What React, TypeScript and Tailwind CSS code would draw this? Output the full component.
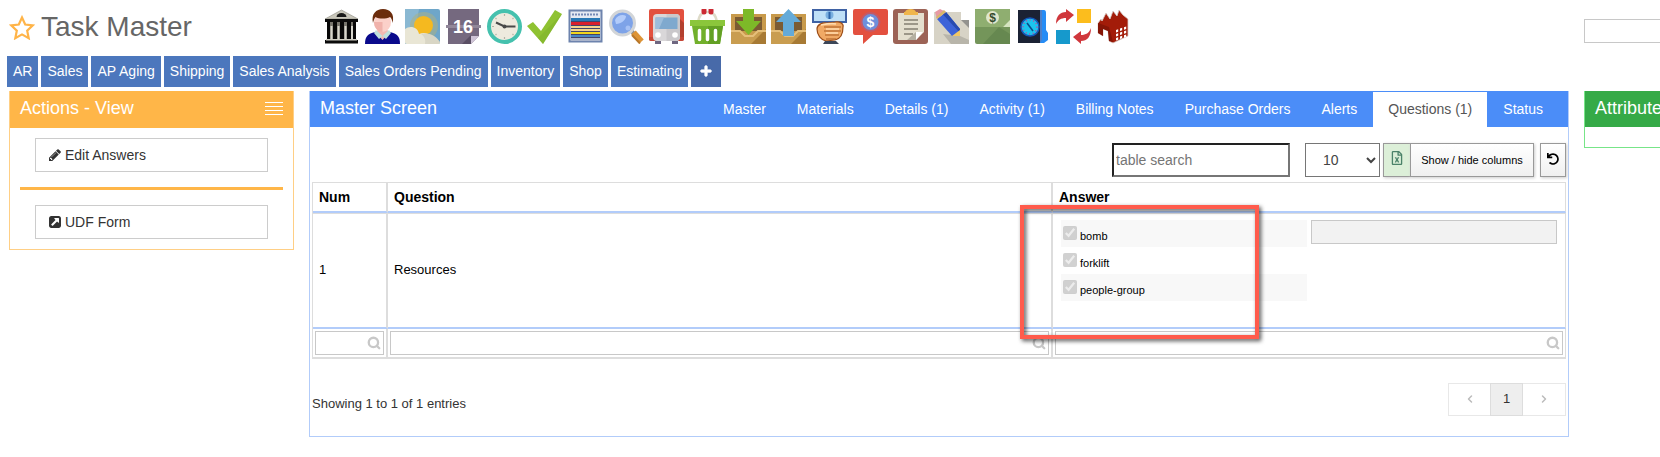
import React from "react";
import { FaPlus, FaUndo, FaRegFileExcel } from "react-icons/fa";
import { ChevronLeft, ChevronRight, Search } from "lucide-react";

type Shortcut = { label: string; art: React.ReactNode };

const shortcuts: Shortcut[] = [
  {
    label: "Bank",
    art: (
      <>
        <path d="M17.500 1 34 10H1z" fill="#c9c7bb" stroke="#8c8a80" strokeWidth=".6" />
        <path d="M12.500 8a5 4 0 0 1 10 0z" fill="#1a1a1a" />
        <path d="M1 10h33v3H1z" fill="#0b0b0b" />
        <path d="M4 13h27v17H4z" fill="#77756d" />
        <path d="M3 13h3v17H3zM9 13h4v17H9zM16 13h4v17h-4zM23 13h4v17h-4zM29 13h3v17h-3z" fill="#080808" />
        <path d="M6.500 17h2v13h-2zM13.500 17h2v13h-2zM20.500 17h2v13h-2zM27 17h2v13h-2z" fill="#d7d5cc" />
        <path d="M1 31h33v3.500H1z" fill="#0b0b0b" />
        <path d="M2 30h31v1.500H2z" fill="#cfcdc2" />
      </>
    ),
  },
  {
    label: "Contact",
    art: (
      <>
        <path d="M0 35c0-8 3-10 10-12h15c7 2 10 4 10 12z" fill="#0a0a8c" />
        <path d="M13 20h9l2 4-6.500 7L11 24z" fill="#f3b9b2" />
        <path d="m11 21 6.500 6L14 30l-5-6zM24 21l-6.500 6 3.500 3 5-6z" fill="#bfe0dc" />
        <ellipse cx="17.500" cy="13" rx="8.500" ry="10" fill="#fbd0c9" />
        <path d="M17.500 23c-5 0-8.500-4.500-8.500-10h8.500z" fill="#f0b2ab" />
        <path d="M8 14C6 5 11 0 18 0s12 5 9.500 14c-.500-3-1-5-2.500-6-4 2-11 2-14.500 0C9 10 8.500 12 8 14z" fill="#6b2c0c" />
      </>
    ),
  },
  {
    label: "Weather",
    art: (
      <>
        <rect width="35" height="35" rx="2" fill="#6ea6c9" />
        <path d="M0 0h14L8 35H0z" fill="#8ab8d2" />
        <circle cx="19" cy="17" r="14" fill="#a5b08c" opacity=".6" />
        <circle cx="18.500" cy="16.500" r="9.500" fill="#f5b91f" />
        <path d="M0 20c5-4 13-2 14 5 7-3 15 1 15 10H2c-2 0-2-1-2-2z" fill="#e9e6d5" />
        <path d="M16 25c7-2 15 1 19 8 0 2-1 2-2 2H20c1-5-1-8-4-10z" fill="#d9d6c5" />
      </>
    ),
  },
  {
    label: "Calendar",
    art: (
      <>
        <path d="M2 0h31v27l-8 8H2z" fill="#75697f" />
        <path d="M0 16h35v3H0z" fill="#918799" />
        <path d="M16 35 25 26v9z" fill="#5a4f64" />
        <path d="M25 27h8l-8 8z" fill="#cfc4d6" />
        <text x="17" y="24" textAnchor="middle" fontSize="18" fontWeight="700" fill="#fff">16</text>
      </>
    ),
  },
  {
    label: "Clock",
    art: (
      <>
        <circle cx="17.500" cy="17.500" r="15.500" fill="#eeeade" stroke="#45c1ae" strokeWidth="4" />
        <path d="M17.500 5v2M17.500 28v2M5 17.500h2M8.500 9l1 1M26.500 9l-1 1M8.500 26l1-1M26.500 26l-1-1" stroke="#b5b2a6" strokeWidth="1.200" />
        <path d="m9 13.500 8.500 4h11" fill="none" stroke="#494949" strokeWidth="2" />
        <circle cx="17.500" cy="17.500" r="2" fill="#494949" />
      </>
    ),
  },
  {
    label: "Approve",
    art: (
      <>
        <path d="m0 17 6-4 8 9L28 1l7 4-19 30z" fill="#8fc232" />
        <path d="m16 35-5-6L35 5z" fill="#7db02a" opacity=".5" />
      </>
    ),
  },
  {
    label: "Schedule board",
    art: (
      <>
        <rect x="1.500" y="1.500" width="32" height="31" fill="#e5e9f2" stroke="#6d83ad" strokeWidth="2" />
        <path d="M4 5.500h27" stroke="#7589b5" strokeWidth="2" strokeDasharray="2 1" />
        <path d="M3 9h29v3.500H3z" fill="#2878b5" />
        <path d="M3 13h29v3H3z" fill="#d9202c" />
        <path d="M3 17h29v5H3z" fill="#f5d58d" />
        <path d="M3 22.500h29v3H3z" fill="#f1d51c" />
        <path d="M3 26h29v2H3z" fill="#4b86c1" />
        <path d="M3 28.500h29v3H3z" fill="#aab2c6" />
        <path d="M3 12.500h29M3 16.500h29M3 19.500h29M3 22.500h29M3 25.500h29M3 28.500h29" stroke="#43456d" strokeWidth="1" />
      </>
    ),
  },
  {
    label: "Find",
    art: (
      <>
        <path d="m22 21 3 4" stroke="#8f8f8f" strokeWidth="4" />
        <path d="m24.500 23.500 8 9" stroke="#dd9436" strokeWidth="6" />
        <path d="m23 26 8 8.500" stroke="#b8772a" strokeWidth="2" />
        <circle cx="13.500" cy="14" r="12" fill="#7ea3e8" stroke="#d2d5d8" strokeWidth="3" />
        <path d="M6 11c2-5 8-6 11-4 0 4-5 8-10 8z" fill="#b3ccfa" />
        <circle cx="19" cy="19" r="2.500" fill="#a6c1f5" />
      </>
    ),
  },
  {
    label: "Transit",
    art: (
      <>
        <rect width="35" height="35" rx="2" fill="#e2513f" />
        <path d="M31 10 35 14v21h-8z" fill="#b3402f" />
        <path d="M0 31h35v4H0z" fill="#fff" />
        <path d="M0 28h35v3a2 2 0 0 1-2 1H2a2 2 0 0 1-2-1z" fill="#c54636" />
        <rect x="4" y="5" width="27" height="27" rx="4" fill="#d9d7d9" />
        <path d="M17.500 5H27a4 4 0 0 1 4 4v19a4 4 0 0 1-4 4h-9.500z" fill="#cac8cb" />
        <rect x="6.500" y="8.500" width="22" height="11.500" fill="#7fa9ce" />
        <path d="M6.500 8.500H15l-5 11.500H6.500z" fill="#9cbddb" />
        <circle cx="9" cy="26" r="2.800" fill="#fff" />
        <circle cx="26" cy="26" r="2.800" fill="#fff" />
        <path d="M6 32h6v3H6zM23 32h6v3h-6z" fill="#6f6781" />
      </>
    ),
  },
  {
    label: "Basket",
    art: (
      <>
        <path d="M8 13c1-7 5-10 9.500-10S26 6 27 13" fill="none" stroke="#dedbc9" strokeWidth="2.500" />
        <path d="M14 1v2M21 1v2" stroke="#cc2a33" strokeWidth="5" strokeLinecap="round" />
        <path d="M0 11h35v6H0z" fill="#8bc63b" />
        <path d="M2 17h31l-3 18H5z" fill="#72b02c" />
        <path d="M18 17h15l-3 18H18z" fill="#63a024" />
        <path d="M9.500 21.500v9M17.500 21.500v9M25.500 21.500v9" stroke="#fff" strokeWidth="3.500" strokeLinecap="round" />
      </>
    ),
  },
  {
    label: "Receive",
    art: (
      <>
        <path d="M0 5h35v30H0z" fill="#c89a4b" />
        <path d="M4 8h27v14H4z" fill="#7b5b33" />
        <path d="M0 22h9l5 5h8l5-5h8v13H0z" fill="#c99d50" />
        <path d="M20 35 35 20v15z" fill="#a77a34" />
        <path d="M0 22h9l5 5h8l5-5h8" fill="none" stroke="#e5bf7a" strokeWidth="2" />
        <path d="M12 0h11v12h7L17.500 26 5 12h7z" fill="#7db928" />
      </>
    ),
  },
  {
    label: "Send",
    art: (
      <>
        <path d="M0 5h35v30H0z" fill="#c89a4b" />
        <path d="M4 8h27v14H4z" fill="#7b5b33" />
        <path d="M0 22h9l5 5h8l5-5h8v13H0z" fill="#c99d50" />
        <path d="M20 35 35 20v15z" fill="#a77a34" />
        <path d="M0 22h9l5 5h8l5-5h8" fill="none" stroke="#e5bf7a" strokeWidth="2" />
        <path d="M17.500 0 30 13h-7v14H12V13H5z" fill="#64aad8" />
      </>
    ),
  },
  {
    label: "Pay",
    art: (
      <>
        <path d="M1 1h33v12H1z" fill="#bfe0f7" stroke="#3f62a4" strokeWidth="2" />
        <circle cx="17.500" cy="6" r="4" fill="#79afe0" />
        <path d="M16.500 3h2v7h-2z" fill="#2c63a8" />
        <path d="M5 20c0-4 5-7 10-6l8-1c5-1 9 2 8 5 0 8-3 12-8 13l-9 1c-5-1-9-6-9-12z" fill="#f0a965" stroke="#9c4d17" strokeWidth="1.200" />
        <path d="M12 18h17M12 22h17M13 26h14M14 30h10" stroke="#a85a20" strokeWidth="1.200" />
        <path d="M9 16c5-1 10-2 15-1M14 20h13M14 24h12" stroke="#ffdcae" strokeWidth="1.600" fill="none" />
        <path d="M13 32h11l3 3H11z" fill="#3c4658" />
      </>
    ),
  },
  {
    label: "Price chat",
    art: (
      <>
        <path d="M2 0h31a2 2 0 0 1 2 2v22a2 2 0 0 1-2 2H20l-10 9v-9H2a2 2 0 0 1-2-2V2a2 2 0 0 1 2-2z" fill="#e3503f" />
        <circle cx="17.500" cy="13" r="9" fill="#6e8fdb" stroke="#c25a69" strokeWidth="2" />
        <text x="17.500" y="18" textAnchor="middle" fontSize="14" fontWeight="700" fill="#fff">$</text>
      </>
    ),
  },
  {
    label: "Clipboard",
    art: (
      <>
        <rect width="35" height="35" rx="3" fill="#9c6356" />
        <path d="M5 4h26v19l-8 8H5z" fill="#e4dfce" />
        <path d="M12 3c1-4 10-4 11 0h2v3H11V3z" fill="#f0b64b" />
        <path d="M11 11h14M11 15h14M11 20h14M11 25h9" stroke="#9c9788" strokeWidth="2" />
        <path d="M23 23h7l-7 8z" fill="#fff" />
        <path d="m14 31 9-8v8z" fill="#b5b0a1" />
      </>
    ),
  },
  {
    label: "Notes",
    art: (
      <>
        <path d="M0 3h27v8h8v24H0z" fill="#d7d3c6" />
        <path d="M27 11h8v8z" fill="#93928e" />
        <path d="m9 25 17 2 9 4v4H17z" fill="#b8b5aa" />
        <path d="m3 10 9-7 14 17v7h-8z" fill="#3d63d8" />
        <path d="m9 5.500 3-2.500 14 17v4z" fill="#284bb0" />
        <path d="M1 3 6 0l6 3-9 7z" fill="#e79aa4" />
        <path d="m3 10-1-2 8-7 2 2z" fill="#d7b76a" />
        <path d="m18 27 8-6v6z" fill="#f1c766" />
      </>
    ),
  },
  {
    label: "Cash",
    art: (
      <>
        <rect width="35" height="35" rx="2" fill="#74955a" />
        <path d="M0 0h35v12l-7 6H0z" fill="#8fae70" />
        <path d="M24 18 35 25v10H8z" fill="#668850" />
        <path d="m28 18 7-7v7z" fill="#d5e4bf" />
        <circle cx="17.500" cy="8.500" r="6.500" fill="#e0e6cc" />
        <text x="17.500" y="13" textAnchor="middle" fontSize="12" fontWeight="700" fill="#344a2c">$</text>
      </>
    ),
  },
  {
    label: "Time book",
    art: (
      <>
        <path d="M3 1h24v33H3z" fill="#1b2234" />
        <path d="M25 1h2v33h-2z" fill="#4b7fc9" />
        <path d="M27 1h2q2 0 2 3v17l2 3v7l-4 3h-4l2-3z" fill="#258cf5" />
        <circle cx="15" cy="18" r="9" fill="#1cc3ee" stroke="#1455b8" strokeWidth="1.500" />
        <circle cx="15" cy="18" r="7" fill="none" stroke="#c04b9a" strokeWidth="1.500" strokeDasharray="1 2.600" />
        <path d="m12 14 3 4 3 4" stroke="#0b4c8a" strokeWidth="1.500" fill="none" />
      </>
    ),
  },
  {
    label: "Exchange",
    art: (
      <>
        <path d="M21 0h14v14H21z" fill="#fcbd1d" />
        <path d="M0 21h14v14H0z" fill="#1699cc" />
        <path d="M0 15C0 7 4 3 10 3V0l8 6-8 7V9C5 9 2 11 0 15z" fill="#d0373c" />
        <path d="M35 19c0 9-4 13-10 13v3l-8-7 8-6v4c5 0 8-2 10-7z" fill="#d0373c" />
      </>
    ),
  },
  {
    label: "Factory",
    art: (
      <>
        <path d="m1 14 3-4 1 2 4-8 4 6 3-8 4 5 2-6 4 5 5 4v17l-15 7-4-2-1-10-5-2v7l-5-3z" fill="#a31c09" stroke="#d8cfcc" strokeWidth=".8" />
        <path d="m1 14 11 4 4 15-4-1-1-10-5-2v7l-5-3z" fill="#861506" />
        <path d="m19 21 2.200-.8v2.500l-2.200.8zM23 19.600l2.200-.8v2.500l-2.200.8zM27 18.200l2.200-.8v2.500l-2.200.8zM19 25l2.200-.8v2.500l-2.200.8zM23 23.600l2.200-.8v2.500l-2.200.8zM27 22.200l2.200-.8v2.500l-2.200.8zM19 29l2.200-.8v2.500L19 31.500zM23 27.600l2.200-.8v2.500l-2.200.8zM27 26.200l2.200-.8v2.500l-2.200.8z" fill="#fff" />
      </>
    ),
  },
];

const reports = ["AR", "Sales", "AP Aging", "Shipping", "Sales Analysis", "Sales Orders Pending", "Inventory", "Shop", "Estimating"];
const tabs = ["Master", "Materials", "Details (1)", "Activity (1)", "Billing Notes", "Purchase Orders", "Alerts", "Questions (1)", "Status"];
const answers = ["bomb", "forklift", "people-group"];

function PencilIcon() {
  return (
    <svg viewBox="0 128 1536 1536" className="size-3" fill="currentColor" aria-hidden="true">
      <path d="M363 1536l91-91-235-235-91 91v107h128v128h107zm523-928q0-22-22-22-10 0-17 7l-542 542q-7 7-7 17 0 22 22 22 10 0 17-7l542-542q7-7 7-17zm-54-192l416 416-832 832h-416v-416zm683 96q0 53-37 90l-166 166-416-416 166-165q36-38 90-38 53 0 91 38l235 234q37 39 37 91z" />
    </svg>
  );
}

function LinkSquareIcon() {
  return (
    <svg viewBox="0 128 1536 1536" className="size-3" fill="currentColor" fillRule="evenodd" aria-hidden="true">
      <path d="M1280 928v-480q0-26-19-45t-45-19h-480q-42 0-59 39-17 41 14 70l144 144-534 534q-19 19-19 45t19 45l102 102q19 19 45 19t45-19l534-534 144 144q18 19 45 19 12 0 25-5 39-17 39-59zm256-512v960q0 119-84.500 203.500t-203.500 84.500h-960q-119 0-203.500-84.500t-84.500-203.500v-960q0-119 84.500-203.500t203.500-84.500h960q119 0 203.500 84.500t84.500 203.500z" />
    </svg>
  );
}

function ActionButton({ icon, children }: { icon: React.ReactNode; children: React.ReactNode }) {
  return (
    <button className="mx-[15px] flex h-[34px] items-center gap-1 border border-[#ccc] bg-white px-[13px] text-[14px] text-[#333]">
      {icon}
      {children}
    </button>
  );
}

function FilterCell({ label, last = false }: { label: string; last?: boolean }) {
  return (
    <td className={last ? "border-b-2 border-r border-[#ddd] p-[2px]" : "border-b-2 border-r-2 border-[#ddd] p-[2px]"}>
      <div className="flex h-6 items-center border border-[#c8c8c8] pr-[2px]">
        <input aria-label={label} className="h-full w-0 min-w-0 flex-1 px-1 text-[13px] outline-none" />
        <Search className="size-[14px] text-[#c8c8c8]" strokeWidth={4} aria-hidden="true" />
      </div>
    </td>
  );
}

export default function App() {
  return (
    <div className="overflow-hidden bg-white pb-5 font-['Liberation_Sans',Arial,sans-serif] text-[#333]">
      <header className="grid h-14 grid-cols-[315px_minmax(0,1fr)_76px] items-start pl-[9px]">
        <h1 className="flex h-[54px] items-center gap-[6px] text-[28px] text-[#666]">
          <svg viewBox="0 0 26 25" className="h-[25px] w-[26px]" fill="none" stroke="#ffb448" strokeWidth="2.200" aria-hidden="true">
            <path d="m13 2.500 3.200 7 7.600.9-5.600 5.200 1.500 7.600-6.700-3.800-6.700 3.800 1.500-7.600L2.200 10.400l7.600-.9z" />
          </svg>
          Task Master
        </h1>
        <nav className="flex w-[808px] justify-between pt-[9px]" aria-label="Shortcuts">
          {shortcuts.map((s) => (
            <a key={s.label} href="#" aria-label={s.label}>
              <svg viewBox="0 0 35 35" className="size-[35px]" aria-hidden="true">
                {s.art}
              </svg>
            </a>
          ))}
        </nav>
        <input aria-label="Search" className="mt-[19px] h-6 w-full border border-r-0 border-[#c8c8c8] px-1 text-[13px]" />
      </header>

      <nav className="flex gap-[3px] pl-[7px]" aria-label="Reports">
        {reports.map((r) => (
          <a key={r} href="#" className="flex h-[31px] items-center bg-[#4c77bd] px-[6px] text-[14px] whitespace-nowrap text-white">
            {r}
          </a>
        ))}
        <button aria-label="Add report" className="flex h-[31px] w-[30px] items-center justify-center bg-[#486aa9] pb-[2px] text-white">
          <FaPlus className="size-3 stroke-white stroke-[40px]" />
        </button>
      </nav>

      <div className="mt-1 grid grid-cols-[285px_minmax(0,1fr)_76px] items-start gap-[15px] pl-[9px]">
        <aside className="border border-[#ffcf85]">
          <div className="-mt-px flex h-[37px] items-center justify-between bg-[#ffb648] px-[10px] text-white">
            <h2 className="pb-[2px] text-[18px]">Actions - View</h2>
            <button aria-label="Menu" className="flex w-[18px] flex-col gap-[3px] pb-[2px]">
              <span className="h-px w-full bg-white" />
              <span className="h-px w-full bg-white" />
              <span className="h-px w-full bg-white" />
              <span className="h-px w-full bg-white" />
            </button>
          </div>
          <div className="flex flex-col gap-[15px] p-[10px]">
            <ActionButton icon={<PencilIcon />}>Edit Answers</ActionButton>
            <hr className="border-t-3 border-[#ffb648]" />
            <ActionButton icon={<LinkSquareIcon />}>UDF Form</ActionButton>
          </div>
        </aside>

        <main className="border border-t-0 border-[#b2ccfa]">
          <div className="flex h-9 justify-between bg-[#4b8df8] px-[10px]">
            <h2 className="pt-[5px] text-[18px] leading-6 text-white">Master Screen</h2>
            <div className="flex gap-px pt-px" role="tablist">
              {tabs.map((t) => (
                <button
                  key={t}
                  role="tab"
                  aria-selected={t === "Questions (1)"}
                  className={
                    t === "Questions (1)"
                      ? "bg-white px-[15px] text-[14px] whitespace-nowrap text-[#555]"
                      : "px-[15px] text-[14px] whitespace-nowrap text-white"
                  }
                >
                  {t}
                </button>
              ))}
            </div>
          </div>

          <div className="px-[2px] pt-4">
            <div className="flex h-[34px] justify-end">
              <input
                aria-label="table search"
                placeholder="table search"
                className="w-[178px] border-2 border-[#222] border-r-[#767676] border-b-[#767676] px-[2px] text-[14px] placeholder:text-[#757575]"
              />
              <select aria-label="Rows per page" className="ml-[15px] w-[75px] border border-[#767676] bg-white pr-0 pl-[13px] text-[14px] text-[#444]">
                <option>10</option>
                <option>25</option>
              </select>
              <button aria-label="Export to Excel" className="ml-[3px] flex w-[27px] items-center justify-center border border-r-0 border-[#999] bg-[#dcefd8] pb-1 text-[#4b8269] shadow-[1px_1px_3px_#ccc]">
                <FaRegFileExcel className="size-[14px]" />
              </button>
              <button className="w-[124px] border border-[#999] bg-linear-to-b from-white to-[#f0f0f0] text-[11px] text-black shadow-[1px_1px_3px_#ccc]">
                Show / hide columns
              </button>
              <button aria-label="Reset table" className="ml-[6px] flex w-[26px] items-center justify-center border border-[#999] bg-linear-to-b from-white to-[#f0f0f0] pb-[2px] text-black shadow-[1px_1px_3px_#ccc]">
                <FaUndo className="size-3" />
              </button>
            </div>

            <table className="mt-[5px] w-full table-fixed border-separate border-spacing-0 border-t border-l border-[#ddd] text-left text-[13px] text-black">
              <colgroup>
                <col className="w-[75px]" />
                <col />
                <col className="w-[513px]" />
              </colgroup>
              <thead>
                <tr className="h-[30px] text-[14px]">
                  <th className="border-r-2 border-b-2 border-r-[#ddd] border-b-[#b2ccfa] px-[6px]">Num</th>
                  <th className="border-r-2 border-b-2 border-r-[#ddd] border-b-[#b2ccfa] px-[6px]">Question</th>
                  <th className="border-r border-b-2 border-r-[#ddd] border-b-[#b2ccfa] px-[6px]">Answer</th>
                </tr>
              </thead>
              <tbody>
                <tr className="h-[116px]">
                  <td className="border-t border-r-2 border-b-2 border-[#ddd] border-b-[#b2ccfa] px-[6px] pb-[2px]">1</td>
                  <td className="border-t border-r-2 border-b-2 border-[#ddd] border-b-[#b2ccfa] px-[6px] pb-[2px]">Resources</td>
                  <td className="relative border-t border-r border-b-2 border-[#ddd] border-b-[#b2ccfa] px-2 pt-[6px] align-top">
                    <div className="grid grid-cols-2 items-start gap-1">
                      <ul>
                        {answers.map((a) => (
                          <li key={a} className="flex h-[27px] gap-[3px] px-[2px] odd:bg-[#f8f8f8]">
                            <input id={a} type="checkbox" checked disabled readOnly className="mt-[6px] size-[14px]" />
                            <label htmlFor={a} className="pt-1 text-[11px] leading-6">
                              {a}
                            </label>
                          </li>
                        ))}
                      </ul>
                      <input aria-label="Resources value" disabled className="h-6 w-full border border-[#c8c8c8] bg-[#f2f2f2] px-1" />
                    </div>
                    <div className="pointer-events-none absolute -top-[9px] -left-[33px] z-10 h-[134px] w-[239px] border-4 border-[#ff5b4c] [filter:drop-shadow(2px_2px_2px_#000000b0)]" />
                  </td>
                </tr>
              </tbody>
              <tfoot>
                <tr>
                  <FilterCell label="Filter Num" />
                  <FilterCell label="Filter Question" />
                  <FilterCell label="Filter Answer" last />
                </tr>
              </tfoot>
            </table>

            <div className="flex items-center justify-between pt-6 pb-5">
              <p className="pt-2 text-[13px]">Showing 1 to 1 of 1 entries</p>
              <div className="flex h-[33px] text-[13px]">
                <button aria-label="Previous page" className="flex w-[42px] items-center justify-center border border-r-0 border-[#e8e8e8] pb-[2px] text-[#bbb]">
                  <ChevronLeft className="size-3" strokeWidth={3} />
                </button>
                <button className="w-[33px] border border-[#ddd] bg-[#eee] pb-[2px]">1</button>
                <button aria-label="Next page" className="flex w-[43px] items-center justify-center border border-l-0 border-[#e8e8e8] pb-[2px] text-[#bbb]">
                  <ChevronRight className="size-3" strokeWidth={3} />
                </button>
              </div>
            </div>
          </div>
        </main>

        <aside className="overflow-hidden border border-t-0 border-r-0 border-[#77e588]">
          <h2 className="h-9 bg-[#35aa47] pt-[5px] pl-[10px] text-[18px] leading-6 text-white">Attributes</h2>
          <div className="h-5" />
        </aside>
      </div>
    </div>
  );
}
